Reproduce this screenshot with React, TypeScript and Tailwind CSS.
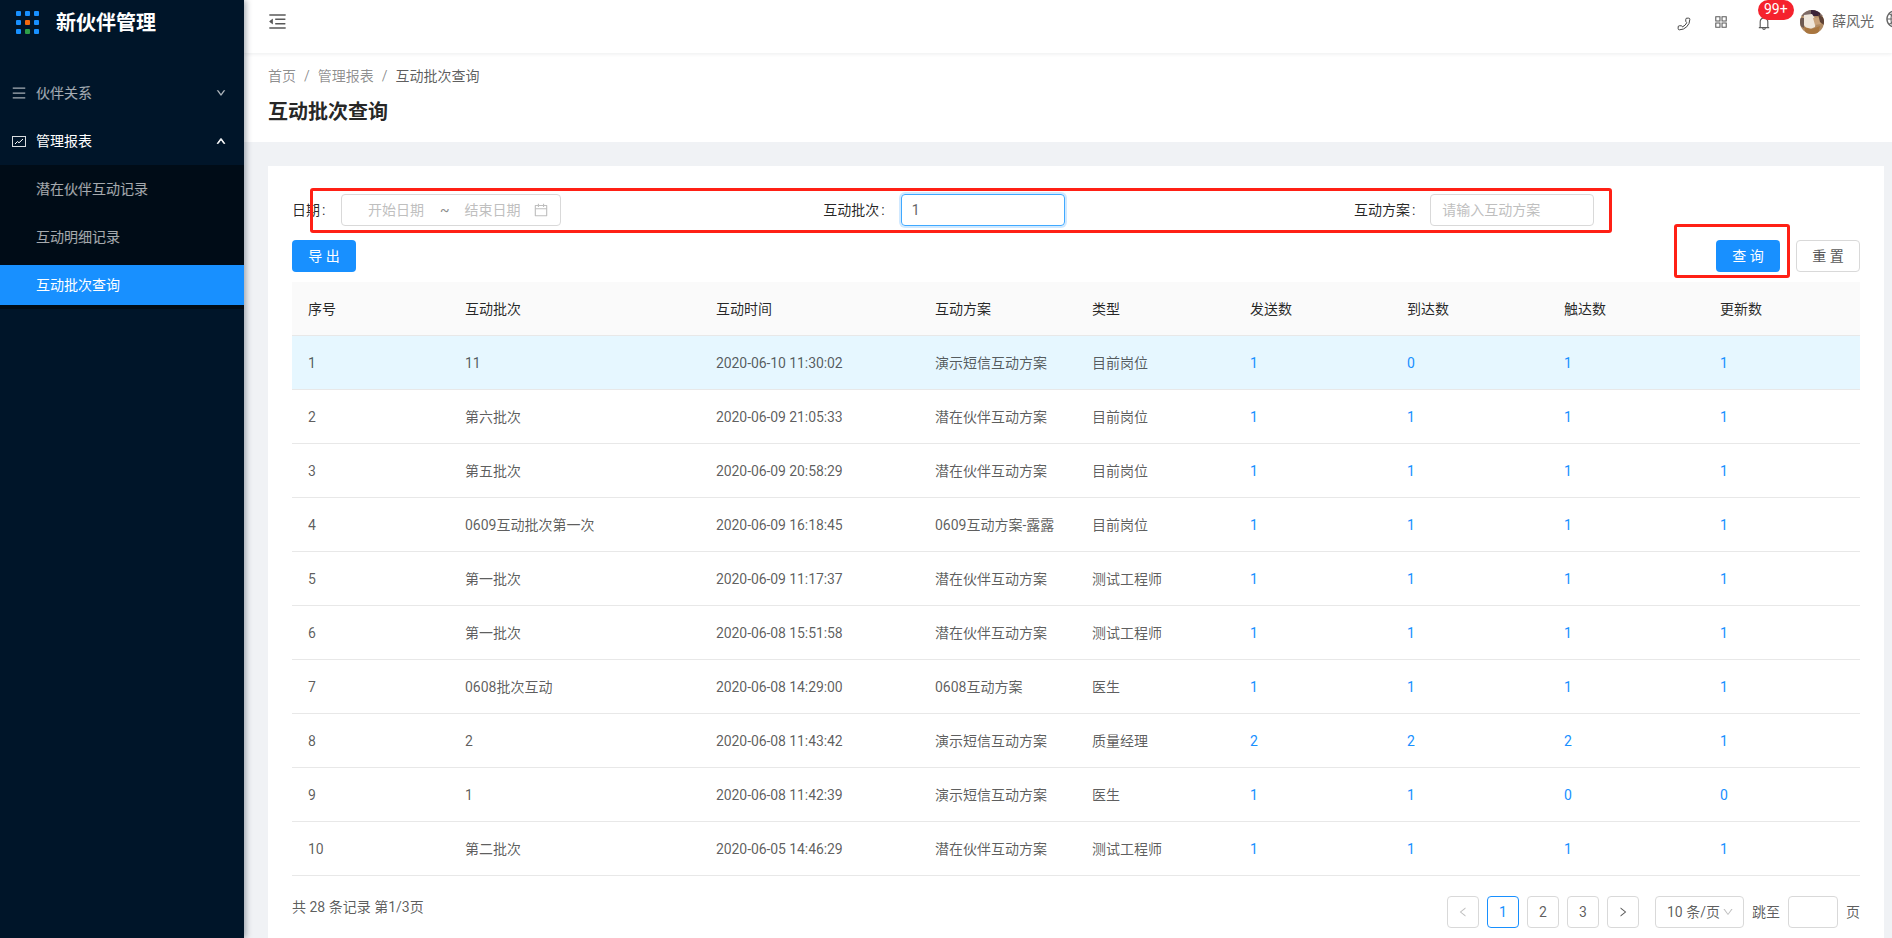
import React from 'react';
import {
  AiOutlineAppstore,
  AiOutlineBell,
  AiOutlineCalendar,
  AiOutlineDown,
  AiOutlineGlobal,
  AiOutlineLeft,
  AiOutlineMenu,
  AiOutlineMenuFold,
  AiOutlineRight,
  AiOutlineUp,
} from 'react-icons/ai';
import { Phone } from 'lucide-react';

const FONT = "font-['Roboto','Noto_Sans_CJK_SC',sans-serif]";

const LOGO_DOTS = [
  'bg-[#1890ff]', 'bg-[#1890ff]', 'bg-[#1890ff]',
  'bg-[#1890ff]', 'bg-[#f4690f]', 'bg-[#1890ff]',
  'bg-[#1890ff]', 'bg-[#2e9e48]', 'bg-[#1890ff]',
];

const ROWS = [
  ['1', '11', '2020-06-10 11:30:02', '演示短信互动方案', '目前岗位', '1', '0', '1', '1'],
  ['2', '第六批次', '2020-06-09 21:05:33', '潜在伙伴互动方案', '目前岗位', '1', '1', '1', '1'],
  ['3', '第五批次', '2020-06-09 20:58:29', '潜在伙伴互动方案', '目前岗位', '1', '1', '1', '1'],
  ['4', '0609互动批次第一次', '2020-06-09 16:18:45', '0609互动方案-露露', '目前岗位', '1', '1', '1', '1'],
  ['5', '第一批次', '2020-06-09 11:17:37', '潜在伙伴互动方案', '测试工程师', '1', '1', '1', '1'],
  ['6', '第一批次', '2020-06-08 15:51:58', '潜在伙伴互动方案', '测试工程师', '1', '1', '1', '1'],
  ['7', '0608批次互动', '2020-06-08 14:29:00', '0608互动方案', '医生', '1', '1', '1', '1'],
  ['8', '2', '2020-06-08 11:43:42', '演示短信互动方案', '质量经理', '2', '2', '2', '1'],
  ['9', '1', '2020-06-08 11:42:39', '演示短信互动方案', '医生', '1', '1', '0', '0'],
  ['10', '第二批次', '2020-06-05 14:46:29', '潜在伙伴互动方案', '测试工程师', '1', '1', '1', '1'],
];

const HEADERS = ['序号', '互动批次', '互动时间', '互动方案', '类型', '发送数', '到达数', '触达数', '更新数'];
const COL_WIDTHS = ['w-[157px]', 'w-[251px]', 'w-[219px]', 'w-[157px]', 'w-[158px]', 'w-[157px]', 'w-[157px]', 'w-[156px]', 'w-[156px]'];

const ChartIcon: React.FC = () => (
  <svg viewBox="0 0 14 11" className="h-[11px] w-[14px] shrink-0" fill="none">
    <rect x="0.5" y="0.5" width="13" height="10" stroke="#fff" strokeOpacity="0.85" />
    <path d="M3 8 L5.5 5.5 L7 6.8 L11 3" stroke="#fff" strokeWidth="1" />
  </svg>
);

const Avatar: React.FC = () => (
  <svg viewBox="0 0 24 24" className="h-[24px] w-[24px] shrink-0 rounded-full">
    <rect width="24" height="24" fill="#b08a63" />
    <rect x="0" y="0" width="24" height="6" fill="#7d6a66" />
    <rect x="11" y="0" width="9" height="6" fill="#3c2438" />
    <path d="M4 5 L12 4 L16 10 L15 17 L8 20 L3 14 Z" fill="#efe6da" />
    <path d="M13 8 L20 7 L21 14 L15 15 Z" fill="#c9a27a" />
    <path d="M18 4 L24 8 L24 15 L20 12 Z" fill="#5f4236" />
    <path d="M4 17 L12 19 L20 16 L18 24 L6 24 Z" fill="#a9763f" />
    <path d="M0 8 L4 8 L4 18 L0 16 Z" fill="#6e5a52" />
  </svg>
);

const Sidebar: React.FC = () => (
  <aside className="relative z-10 flex w-[244px] shrink-0 flex-col bg-[#001529] shadow-[2px_0_6px_rgba(0,21,41,0.35)]">
    <div className="flex h-[44px] items-center pl-[16px]">
      <div className="grid grid-cols-3 gap-[4px]">
        {LOGO_DOTS.map((c, i) => (
          <span key={i} className={`h-[5px] w-[5px] rounded-[1px] ${c}`} />
        ))}
      </div>
      <h1 className="mt-[1px] ml-[17px] text-[20px] leading-none font-bold text-white">新伙伴管理</h1>
    </div>
    <div className="mt-[25px] flex h-[48px] items-center pl-[11px] pr-[18px] text-[14px] text-white/65">
      <AiOutlineMenu className="h-[16px] w-[16px]" />
      <span className="ml-[9px] flex-1">伙伴关系</span>
      <AiOutlineDown className="h-[10px] w-[10px] stroke-[60]" />
    </div>
    <div className="flex h-[48px] items-center pl-[12px] pr-[18px] text-[14px] text-white">
      <ChartIcon />
      <span className="ml-[10px] flex-1">管理报表</span>
      <AiOutlineUp className="h-[10px] w-[10px] stroke-[100]" />
    </div>
    <div className="flex flex-col bg-[#000c17] pb-[4px] text-[14px] text-white/65">
      <div className="flex h-[48px] items-center pl-[36px]">潜在伙伴互动记录</div>
      <div className="flex h-[48px] items-center pl-[36px]">互动明细记录</div>
      <div className="mt-[4px] flex h-[40px] items-center bg-[#1890ff] pl-[36px] text-white">互动批次查询</div>
    </div>
  </aside>
);

const Header: React.FC = () => (
  <header className="relative h-[53px] bg-white pl-[23px] shadow-[0_1px_4px_rgba(0,21,41,0.08)]">
    <div className="flex h-[43px] items-center">
      <AiOutlineMenuFold className="h-[21px] w-[21px] text-[#595959]" />
      <div className="ml-auto flex h-full items-center text-[#595959]">
        <Phone className="mt-[5px] h-[14px] w-[14px] -scale-x-100 text-[#444]" strokeWidth={1.7} />
        <AiOutlineAppstore className="ml-[22px] h-[16px] w-[16px]" />
        <div className="relative mt-[2px] ml-[27px]">
          <AiOutlineBell className="h-[16px] w-[16px]" />
          <span className="absolute top-[-15px] left-[2px] flex h-[20px] items-center rounded-[10px] bg-[#f5222d] px-[6px] text-[14px] text-white">99+</span>
        </div>
        <span className="ml-[28px]">
          <Avatar />
        </span>
        <span className="ml-[8px] text-[14px] text-[#666]">薛风光</span>
        <AiOutlineGlobal className="mr-[-13px] mb-[6px] ml-[11px] h-[20px] w-[20px] shrink-0 text-[#666]" />
      </div>
    </div>
  </header>
);

const Filters: React.FC = () => (
  <div className="grid grid-cols-3 text-[14px] text-black/85">
    <div className="flex h-[32px] items-center">
      <label className="w-[49px]">
        日期<span className="ml-[2px]">:</span>
      </label>
      <div className="flex h-[32px] w-[220px] items-center rounded-[4px] border border-[#d9d9d9] pl-[26px] text-[#bfbfbf]">
        <span>开始日期</span>
        <span className="ml-[16px] text-[#8c8c8c]">~</span>
        <span className="ml-[15px]">结束日期</span>
        <AiOutlineCalendar className="ml-[12px] h-[16px] w-[16px]" />
      </div>
    </div>
    <div className="flex h-[32px] items-center">
      <label className="w-[78px] pr-[8px] text-right">
        互动批次<span className="ml-[2px]">:</span>
      </label>
      <input
        readOnly
        value="1"
        className="ml-[8px] h-[32px] w-[164px] rounded-[4px] border border-[#40a9ff] px-[10px] text-[14px] text-[#666] shadow-[0_0_0_2px_rgba(24,144,255,0.2)] outline-none"
      />
    </div>
    <div className="flex h-[32px] items-center">
      <label className="w-[85px] pr-[7px] text-right">
        互动方案<span className="ml-[2px]">:</span>
      </label>
      <input
        readOnly
        placeholder="请输入互动方案"
        className="ml-[8px] h-[32px] w-[164px] rounded-[4px] border border-[#d9d9d9] px-[11px] text-[14px] outline-none placeholder:text-[#bfbfbf]"
      />
    </div>
  </div>
);

const Toolbar: React.FC = () => (
  <div className="mt-[14px] flex items-center text-[14px]">
    <button className="h-[32px] w-[64px] rounded-[4px] bg-[#1890ff] text-white">导 出</button>
    <button className="ml-auto h-[32px] w-[64px] rounded-[4px] bg-[#1890ff] text-white">查 询</button>
    <button className="ml-[16px] h-[32px] w-[64px] rounded-[4px] border border-[#d9d9d9] text-[#595959]">重 置</button>
  </div>
);

const DataTable: React.FC = () => (
  <table className="mt-[10px] w-full table-fixed border-collapse text-[14px]">
    <colgroup>
      {COL_WIDTHS.map((w, i) => (
        <col key={i} className={w} />
      ))}
    </colgroup>
    <thead>
      <tr className="bg-[#fafafa]">
        {HEADERS.map(h => (
          <th key={h} className="border-b border-[#e8e8e8] px-[16px] pt-[17px] pb-[15px] text-left leading-[21px] font-normal text-black/85">
            {h}
          </th>
        ))}
      </tr>
    </thead>
    <tbody>
      {ROWS.map((row, i) => (
        <tr key={row[0]} className={i === 0 ? 'bg-[#e6f7ff]' : ''}>
          {row.map((cell, j) => (
            <td
              key={j}
              className={`border-b border-[#e8e8e8] px-[16px] pt-[17px] pb-[15px] leading-[21px] ${j >= 5 ? 'text-[#1890ff]' : 'text-black/65'} ${j === 2 ? 'tracking-[-0.08px]' : ''}`}
            >
              {cell}
            </td>
          ))}
        </tr>
      ))}
    </tbody>
  </table>
);

const PageBox: React.FC<{ active?: boolean; children: React.ReactNode; muted?: boolean }> = ({ active, children, muted }) => (
  <span
    className={`flex h-[32px] w-[32px] items-center justify-center rounded-[4px] border ${
      active ? 'border-[#1890ff] text-[#1890ff]' : 'border-[#d9d9d9]'
    } ${muted ? 'text-[#bfbfbf]' : active ? '' : 'text-black/65'}`}
  >
    {children}
  </span>
);

const Pagination: React.FC = () => (
  <div className="mt-[20px] flex items-center justify-between text-[14px] text-black/65">
    <span className="mb-[10px]">共 28 条记录 第1/3页</span>
    <div className="flex items-center gap-[8px]">
      <PageBox muted>
        <AiOutlineLeft className="h-[12px] w-[12px]" />
      </PageBox>
      <PageBox active>1</PageBox>
      <PageBox>2</PageBox>
      <PageBox>3</PageBox>
      <PageBox>
        <AiOutlineRight className="h-[12px] w-[12px]" />
      </PageBox>
      <span className="ml-[8px] flex h-[32px] w-[89px] items-center rounded-[4px] border border-[#d9d9d9] pl-[11px]">
        10 条/页
        <AiOutlineDown className="ml-[2px] h-[12px] w-[12px] text-[#bfbfbf]" />
      </span>
      <span>跳至</span>
      <span className="h-[32px] w-[50px] rounded-[4px] border border-[#d9d9d9]" />
      <span>页</span>
    </div>
  </div>
);

export default function App() {
  return (
    <div className={`relative flex h-[938px] w-[1892px] overflow-hidden ${FONT}`}>
      <Sidebar />
      <main className="flex min-w-0 flex-1 flex-col bg-[#f0f2f5]">
        <Header />
        <div className="h-[89px] bg-white pl-[24px] pt-[13px]">
          <div className="flex items-center text-[14px] leading-[21px] text-black/45">
            <span>首页</span>
            <span className="mx-[8px]">/</span>
            <span>管理报表</span>
            <span className="mx-[8px]">/</span>
            <span className="text-black/65">互动批次查询</span>
          </div>
          <h2 className="mt-[11px] text-[20px] leading-[28px] font-semibold text-black/85">互动批次查询</h2>
        </div>
        <section className="mt-[24px] mr-[8px] ml-[24px] flex-1 bg-white px-[24px] pt-[28px]">
          <Filters />
          <Toolbar />
          <DataTable />
          <Pagination />
        </section>
      </main>
      <div className="pointer-events-none absolute top-[188px] left-[310px] h-[45px] w-[1302px] rounded-[3px] border-[3px] border-[#ff2015]" />
      <div className="pointer-events-none absolute top-[224px] left-[1674px] h-[54px] w-[116px] rounded-[3px] border-[3px] border-[#ff2015]" />
    </div>
  );
}
